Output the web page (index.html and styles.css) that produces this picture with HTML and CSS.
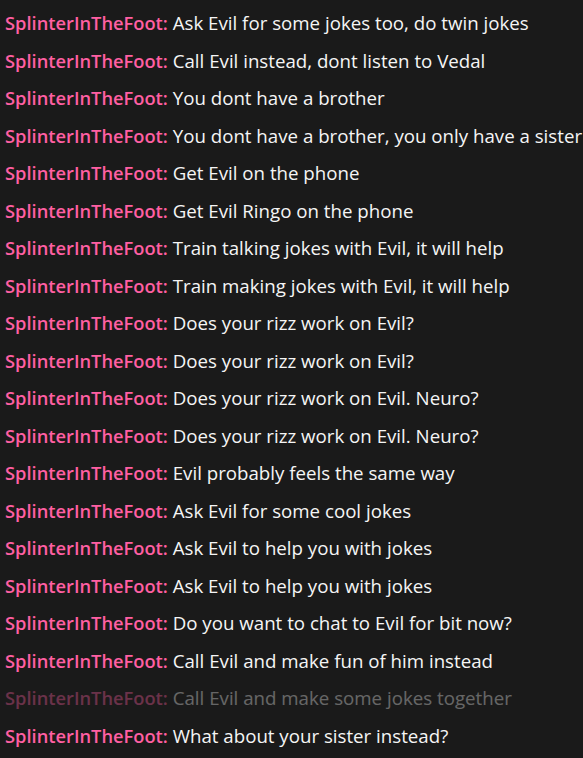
FILE: index.html
```html
<!DOCTYPE html>
<html>
<head>
<meta charset="utf-8">
<link rel="stylesheet" href="styles.css">
</head>
<body>
<div class="chat">
  <div class="msg"><span class="name">SplinterInTheFoot:</span> <span class="text">Ask Evil for some jokes too, do twin jokes</span></div>
  <div class="msg"><span class="name">SplinterInTheFoot:</span> <span class="text">Call Evil instead, dont listen to Vedal</span></div>
  <div class="msg"><span class="name">SplinterInTheFoot:</span> <span class="text">You dont have a brother</span></div>
  <div class="msg"><span class="name">SplinterInTheFoot:</span> <span class="text">You dont have a brother, you only have a sister</span></div>
  <div class="msg"><span class="name">SplinterInTheFoot:</span> <span class="text">Get Evil on the phone</span></div>
  <div class="msg"><span class="name">SplinterInTheFoot:</span> <span class="text">Get Evil Ringo on the phone</span></div>
  <div class="msg"><span class="name">SplinterInTheFoot:</span> <span class="text">Train talking jokes with Evil, it will help</span></div>
  <div class="msg"><span class="name">SplinterInTheFoot:</span> <span class="text">Train making jokes with Evil, it will help</span></div>
  <div class="msg"><span class="name">SplinterInTheFoot:</span> <span class="text">Does your rizz work on Evil?</span></div>
  <div class="msg"><span class="name">SplinterInTheFoot:</span> <span class="text">Does your rizz work on Evil?</span></div>
  <div class="msg"><span class="name">SplinterInTheFoot:</span> <span class="text">Does your rizz work on Evil. Neuro?</span></div>
  <div class="msg"><span class="name">SplinterInTheFoot:</span> <span class="text">Does your rizz work on Evil. Neuro?</span></div>
  <div class="msg"><span class="name">SplinterInTheFoot:</span> <span class="text">Evil probably feels the same way</span></div>
  <div class="msg"><span class="name">SplinterInTheFoot:</span> <span class="text">Ask Evil for some cool jokes</span></div>
  <div class="msg"><span class="name">SplinterInTheFoot:</span> <span class="text">Ask Evil to help you with jokes</span></div>
  <div class="msg"><span class="name">SplinterInTheFoot:</span> <span class="text">Ask Evil to help you with jokes</span></div>
  <div class="msg"><span class="name">SplinterInTheFoot:</span> <span class="text">Do you want to chat to Evil for bit now?</span></div>
  <div class="msg"><span class="name">SplinterInTheFoot:</span> <span class="text">Call Evil and make fun of him instead</span></div>
  <div class="msg faded"><span class="name">SplinterInTheFoot:</span> <span class="text">Call Evil and make some jokes together</span></div>
  <div class="msg"><span class="name">SplinterInTheFoot:</span> <span class="text">What about your sister instead?</span></div>
</div>
</body>
</html>
```
FILE: styles.css
```css
html, body {
  margin: 0;
  padding: 0;
  background: #1a1a1a;
  overflow: hidden;
}
.chat {
  display: flex;
  flex-direction: column;
  padding: 4px 0 0 5px;
  font-family: "Open Sans", "Noto Sans", sans-serif;
  font-size: 18.7px;
}
.msg {
  height: 37.5px;
  line-height: 37.5px;
  white-space: nowrap;
  color: #f5f5f5;
}
.name {
  color: #ff5fa2;
  font-weight: 600;
  font-size: 18.3px;
}
.faded {
  opacity: 0.35;
}
```
